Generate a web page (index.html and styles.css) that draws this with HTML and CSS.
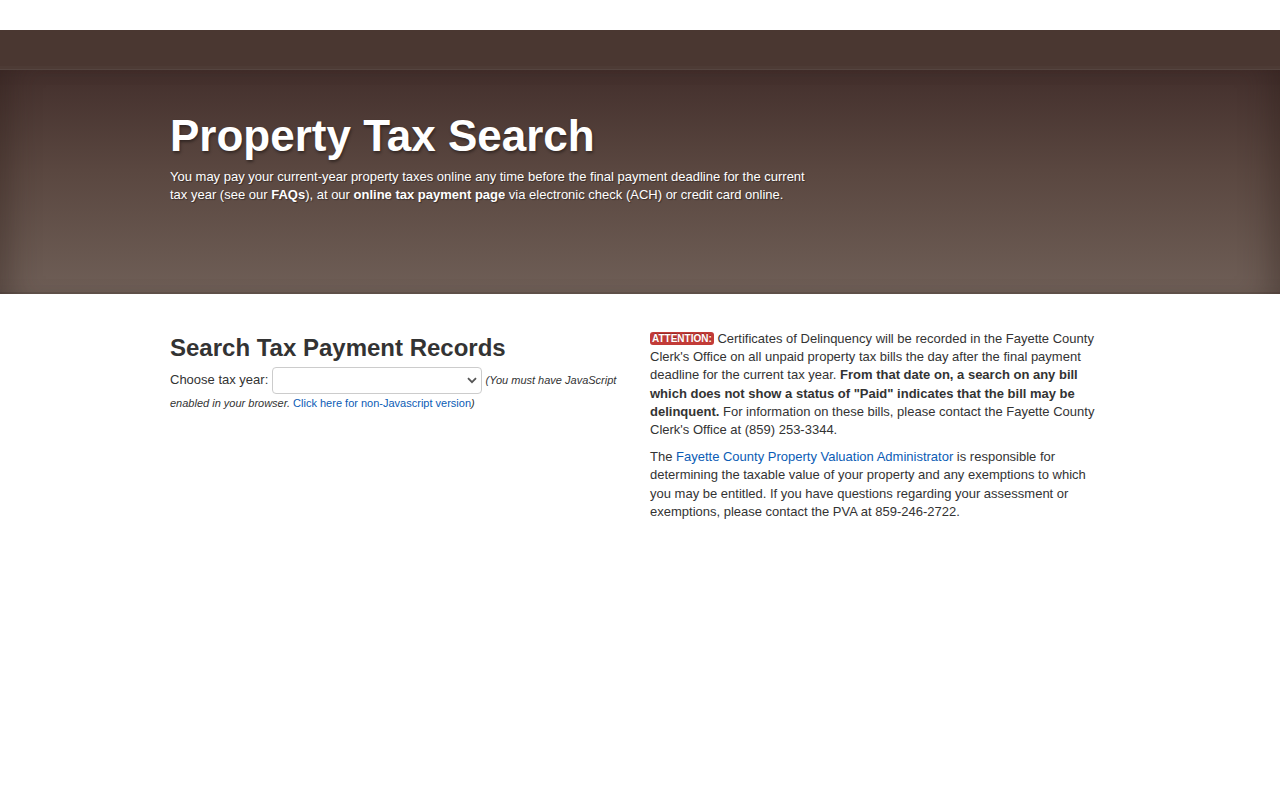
FILE: index.html
```html
<!DOCTYPE html>
<html lang="en">
<head>
    <meta charset="UTF-8">
    <meta name="viewport" content="width=device-width, initial-scale=1.0">
    <title>Property Tax Search</title>
    <link rel="stylesheet" href="styles.css">
</head>
<body>
    <div class="topbar"></div>
    <div class="navbar"></div>

    <header class="hero">
        <div class="container">
            <h1 class="hero-title">Property Tax Search</h1>
            <p class="hero-text">You may pay your current-year property taxes online any time before the final payment deadline for the current tax year (see our <a href="#">FAQs</a>), at our <a href="#">online tax payment page</a> via electronic check (ACH) or credit card online.</p>
        </div>
    </header>

    <main class="container content">
        <section class="col">
            <h2 class="section-title">Search Tax Payment Records</h2>
            <form class="search-form">
                <label for="year">Choose tax year:</label>
                <span class="select-wrap">
                    <select class="year-select" id="year" name="year">
                        <option></option>
                    </select>
                    <svg class="chevron" width="10" height="7" viewBox="0 0 10 7"><path d="M1 1.2 5 5.2 9 1.2" fill="none" stroke="#555" stroke-width="1.8"/></svg>
                </span>
                <span class="note">(You must have JavaScript enabled in your browser. <a href="#">Click here for non-Javascript version</a>)</span>
            </form>
        </section>

        <section class="col notice">
            <p><span class="badge">Attention:</span> Certificates of Delinquency will be recorded in the Fayette County Clerk's Office on all unpaid property tax bills the day after the final payment deadline for the current tax year. <strong>From that date on, a search on any bill which does not show a status of "Paid" indicates that the bill may be delinquent.</strong> For information on these bills, please contact the Fayette County Clerk's Office at (859) 253-3344.</p>
            <p>The <a href="#">Fayette County Property Valuation Administrator</a> is responsible for determining the taxable value of your property and any exemptions to which you may be entitled. If you have questions regarding your assessment or exemptions, please contact the PVA at 859-246-2722.</p>
        </section>
    </main>
</body>
</html>
```

FILE: styles.css
```css
* {
    margin: 0;
    padding: 0;
    box-sizing: border-box;
}

body {
    background-color: white;
    font-family: "Liberation Sans", Arial, sans-serif;
    font-size: 13px;
    line-height: 18px;
    color: #333;
}

a {
    color: #0b5cb5;
    text-decoration: none;
}

.container {
    width: 940px;
    margin: 0 auto;
}

.topbar {
    height: 30px;
    background-color: white;
}

.navbar {
    height: 40px;
    background-color: #4a3731;
    border-bottom: 1px solid #554540;
    box-shadow: inset 0 -3px 0 #4d3b35;
}

.hero {
    height: 224px;
    background: linear-gradient(to bottom, #432f2c 0%, #5a4740 45%, #6f5f57 100%);
    box-shadow: inset 28px 0 30px -18px rgba(40, 25, 22, 0.35), inset -28px 0 30px -18px rgba(40, 25, 22, 0.35), inset 0 -2px 0 rgba(90, 75, 70, 0.5);
    padding-top: 42px;
    color: white;
}

.hero-title {
    font-size: 44px;
    line-height: 48px;
    font-weight: bold;
    text-shadow: 1px 2px 3px rgba(0, 0, 0, 0.4);
    margin-bottom: 8px;
}

.hero-text {
    width: 640px;
    font-size: 13px;
    line-height: 18px;
    text-shadow: 1px 1px 1px rgba(0, 0, 0, 0.4);
}

.hero-text a {
    color: white;
    font-weight: bold;
}

.content {
    display: grid;
    grid-template-columns: 460px 460px;
    column-gap: 20px;
    padding-top: 35px;
}

.section-title {
    font-size: 24px;
    line-height: 28px;
    font-weight: bold;
    margin: 5px 0 5px;
}

.search-form {
    line-height: 17px;
}

.select-wrap {
    position: relative;
    display: inline-block;
    vertical-align: middle;
}

.year-select {
    display: block;
    appearance: none;
    width: 210px;
    height: 27px;
    border: 1px solid #ccc;
    border-radius: 4px;
    background-color: white;
    font-family: inherit;
    font-size: 13px;
}

.chevron {
    position: absolute;
    right: 5px;
    top: 10px;
}

.note {
    font-size: 11px;
    font-style: italic;
}

.note a {
    font-style: normal;
}

.notice {
    padding-top: 1px;
    line-height: 18.2px;
}

.notice p {
    margin-bottom: 9px;
}

.badge {
    display: inline-block;
    background-color: #c23b37;
    color: white;
    font-size: 10px;
    line-height: 13px;
    font-weight: bold;
    text-transform: uppercase;
    padding: 0 2px;
    border-radius: 3px;
    text-shadow: 0 -1px 0 rgba(0, 0, 0, 0.25);
    vertical-align: 1px;
}
```
